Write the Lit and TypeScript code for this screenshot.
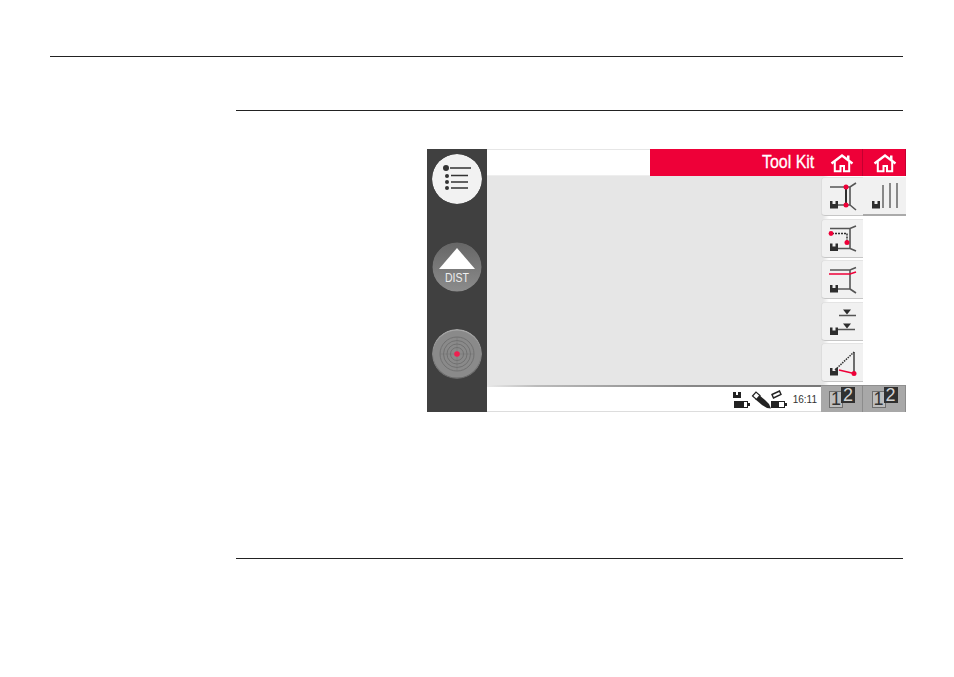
import { LitElement, html, css, svg } from "lit";
import { customElement } from "lit/decorators.js";

const RED = "#ee0038";
const disto = (x: number, y: number) =>
  svg`<path d="M${x} ${y}h2.500v3h3v-3h2.500v7.500h-8z" fill="#2e2e2e"/>`;

const wall = (top: number, bottom: number, tipTop: number, tipBottom: number) =>
  svg`<path d="M9 ${top}H29L35 ${tipTop}M29 ${top}V${bottom}L35 ${tipBottom}M17 ${bottom}H29" fill="none" stroke="#555" stroke-width="1.600"/>`;

const tools = [
  svg`${wall(10, 28, 6, 33)}${disto(9, 24)}<path d="M25 10V28" stroke="#2e2e2e" stroke-width="2"/><circle cx="25" cy="10" r="2.500" fill="${RED}"/><circle cx="25" cy="28" r="2.500" fill="${RED}"/>`,
  svg`${wall(9.500, 29.500, 7, 32)}${disto(9, 24.500)}<path d="M11 14.500H26V22" fill="none" stroke="#2e2e2e" stroke-width="1.500" stroke-dasharray="2 1"/><circle cx="10" cy="14.500" r="2.400" fill="${RED}"/><circle cx="26" cy="23.500" r="2.500" fill="${RED}"/>`,
  svg`${wall(10, 29, 7.500, 33)}<path d="M8 14H29L35 12" fill="none" stroke="${RED}" stroke-width="1.600"/>${disto(9, 25)}`,
  svg`<path d="M18 13.500H35M17 27.500H34" stroke="#555" stroke-width="1.600"/><path d="M22 7.500H30L26 12.500zM22 21.500H30L26 26.500z" fill="#2e2e2e"/>${disto(9, 25.500)}`,
  svg`<path d="M33 9V30" stroke="#555" stroke-width="1.700"/><path d="M14 27L33 9" stroke="#333" stroke-width="1.500" stroke-dasharray="1.500 1"/><path d="M18 27L33 30.500" stroke="${RED}" stroke-width="1.600"/><circle cx="33" cy="30.500" r="2.500" fill="${RED}"/>${disto(9, 25)}`,
];

@customElement("app-root")
export class AppRoot extends LitElement {
  static styles = css`
    :host { display: block; width: 954px; height: 677px; background: #fff; box-sizing: border-box; padding: 56px 51px 0 50px; font-family: "Liberation Sans", sans-serif; overflow: hidden; }
    .top { height: 1px; background: #222; }
    .content { margin: 53px 0 0 186px; height: 409px; border-top: 1px solid #222; border-bottom: 1px solid #222; padding: 38px 0 0 191px; box-sizing: content-box; }
    .device { width: 479px; height: 263px; display: flex; background: #fff; }
    .rail { width: 60px; flex: none; background: #404040; display: flex; flex-direction: column; align-items: center; gap: 37.500px; padding-top: 5px; box-sizing: border-box; }
    .round { width: 50px; height: 50px; border-radius: 50%; display: block; flex: none; }
    .screen { width: 334px; flex: none; display: flex; flex-direction: column; }
    .titlebar { height: 27px; display: flex; flex: none; }
    .blank { width: 163px; box-shadow: inset 0 1px 0 #e6e6e6, inset 0 -1px 0 #eee; }
    .title { flex: 1; background: #ee0038; color: #fff; font: 19px/25px "Liberation Sans", sans-serif; text-align: right; padding-right: 7px; box-sizing: border-box; overflow: hidden; }
    .title span { display: inline-block; transform: scaleX(.84); transform-origin: right center; -webkit-text-stroke: .3px #fff; }
    .main { height: 209px; flex: none; background: #e6e6e6; }
    .edge { height: 2px; flex: none; background: linear-gradient(90deg, #e8e8e8 0%, #bbb 15%, #888 60%, #777 100%); }
    .status { flex: 1; display: flex; align-items: center; justify-content: flex-end; gap: 5px; padding-right: 4px; font: 10px "Liberation Sans", sans-serif; color: #333; box-shadow: inset 0 -1px 0 #ddd; }
    .status svg { display: block; }
    .col { width: 42px; flex: none; display: flex; flex-direction: column; }
    .col.second { width: 43px; }
    .home { height: 27px; flex: none; background: #ee0038; display: flex; align-items: center; justify-content: center; box-shadow: inset -1px 0 0 #c40030; }
    .tools { flex: 1; display: flex; flex-direction: column; gap: 2.500px; padding-top: 1px; background: linear-gradient(90deg, #e6e6e6 0, #e6e6e6 2px, #fff 8px); }
    .col.second .tools { background: #fff; }
    .tool { height: 39px; flex: none; background: #f1f1f1; border-radius: 4px 0 0 4px; box-shadow: inset 1px 0 0 #ddd, inset 0 1px 0 #e4e4e4, inset 0 -1px 0 #c6c6c6; }
    .tool svg { display: block; }
    .col.second .tool { border-radius: 0; box-shadow: inset 0 -2px 0 #aaa; }
    .pages { height: 27px; flex: none; background: #a8a8a8; display: flex; align-items: flex-start; justify-content: center; padding-top: 2px; box-sizing: border-box; box-shadow: inset -1px 0 0 #8c8c8c, inset 0 1px 0 #8f8f8f; }
    .pagenum { position: relative; width: 26px; height: 21px; display: block; }
    .one, .two { position: absolute; display: block; text-align: center; font-family: "Liberation Sans", sans-serif; }
    .one { left: 0; bottom: 0; width: 14px; height: 17px; background: #bdbdbd; border: 1px solid #6e6e6e; box-sizing: border-box; font-size: 18px; line-height: 15px; color: #333; }
    .two { right: 0; top: 0; width: 14px; height: 16px; background: #303030; color: #d2d2d2; font-size: 18px; line-height: 16px; }
  `;

  homeIcon() {
    return html`<svg width="24" height="20" viewBox="0 0 24 20" aria-hidden="true"><path d="M1.500 10.500L12 2.500L22.500 10.500" fill="none" stroke="#fff" stroke-width="2.400"/><path d="M4.800 9V18.200H10.500V13H14V18.200H19.200V9" fill="none" stroke="#fff" stroke-width="2"/><path d="M17 2.500H19.500V7L17 5.500z" fill="#fff"/></svg>`;
  }

  pages() {
    return html`<div class="pages"><span class="pagenum"><span class="one">1</span><span class="two">2</span></span></div>`;
  }

  render() {
    return html`
      <div class="top"></div>
      <div class="content">
        <div class="device">
          <div class="rail">
            <svg class="round" viewBox="0 0 50 50" aria-hidden="true">
              <circle cx="25" cy="25" r="25" fill="#f2f2f2"/>
              <circle cx="14" cy="14" r="3" fill="#333"/><circle cx="15" cy="22" r="2" fill="#333"/><circle cx="15" cy="28" r="2" fill="#333"/><circle cx="15" cy="34" r="2" fill="#333"/>
              <path d="M18 14H39M19 21.500H36M19 28H36M19 34H36" stroke="#333" stroke-width="1.700"/>
            </svg>
            <svg class="round" viewBox="0 0 50 50" aria-hidden="true">
              <defs>
                <linearGradient id="g" x1="0" y1="0" x2="0" y2="1"><stop offset="0" stop-color="#666"/><stop offset="1" stop-color="#8c8c8c"/></linearGradient>
                <linearGradient id="t" x1="0" y1="0" x2="0" y2="1"><stop offset="0" stop-color="#a8a8a8"/><stop offset="1" stop-color="#666"/></linearGradient>
              </defs>
              <circle cx="25" cy="25" r="24.500" fill="url(#g)"/>
              <path d="M7 27L25 6L43 27z" fill="#fff"/>
              <text x="25" y="39.500" text-anchor="middle" font-family="Liberation Sans" font-size="13" fill="#eee" textLength="24" lengthAdjust="spacingAndGlyphs">DIST</text>
            </svg>
            <svg class="round" viewBox="0 0 50 50" aria-hidden="true">
              <circle cx="25" cy="25" r="24.300" fill="#8a8a8a" stroke="url(#t)" stroke-width="1.400"/>
              <g fill="none" stroke="#717171"><circle cx="25" cy="25" r="17"/><circle cx="25" cy="25" r="13.500"/><circle cx="25" cy="25" r="10"/><circle cx="25" cy="25" r="6.500"/><path d="M25 8V42M8 25H42" stroke-width=".5"/></g>
              <circle cx="25" cy="25" r="2.800" fill="#ef1f50"/>
            </svg>
          </div>
          <div class="screen">
            <div class="titlebar"><div class="blank"></div><div class="title"><span>Tool Kit</span></div></div>
            <div class="main"></div>
            <div class="edge"></div>
            <div class="status">
              <svg width="56" height="19" viewBox="0 0 56 19" aria-hidden="true">
                <path d="M1 2h3v3h2v-3h3v6h-8z" fill="#222"/><rect x="2.500" y="11.500" width="13" height="6" fill="#fff" stroke="#222"/><rect x="2" y="11" width="10" height="7" fill="#222"/><rect x="16" y="13" width="2" height="3" fill="#222"/>
                <path d="M26 4L33 10L37 14L39 18.500L35 18L30 15L23 9z" fill="#222"/><path d="M20.500 6L24 2L28 5.500L24.500 9.500z" fill="#fff" stroke="#222" stroke-width="1.200"/>
                <path d="M40 4.500L47.500 1L49 4.500L41.500 8z" fill="#fff" stroke="#222" stroke-width="1.400"/><rect x="39.500" y="11.500" width="13" height="6" fill="#fff" stroke="#222"/><rect x="39" y="11" width="8" height="7" fill="#222"/><rect x="53" y="13" width="2" height="3" fill="#222"/>
              </svg>
              <span>16:11</span>
            </div>
          </div>
          <div class="col">
            <div class="home">${this.homeIcon()}</div>
            <div class="tools">
              ${tools.map((t) => html`<div class="tool"><svg width="42" height="39" viewBox="0 0 42 39" aria-hidden="true">${t}</svg></div>`)}
            </div>
            ${this.pages()}
          </div>
          <div class="col second">
            <div class="home">${this.homeIcon()}</div>
            <div class="tools">
              <div class="tool"><svg width="43" height="39" viewBox="0 0 43 39" aria-hidden="true"><path d="M20 8V31M27 6V31M34 6V31" stroke="#666" stroke-width="1.500"/>${disto(9, 24)}</svg></div>
            </div>
            ${this.pages()}
          </div>
        </div>
      </div>
    `;
  }
}
